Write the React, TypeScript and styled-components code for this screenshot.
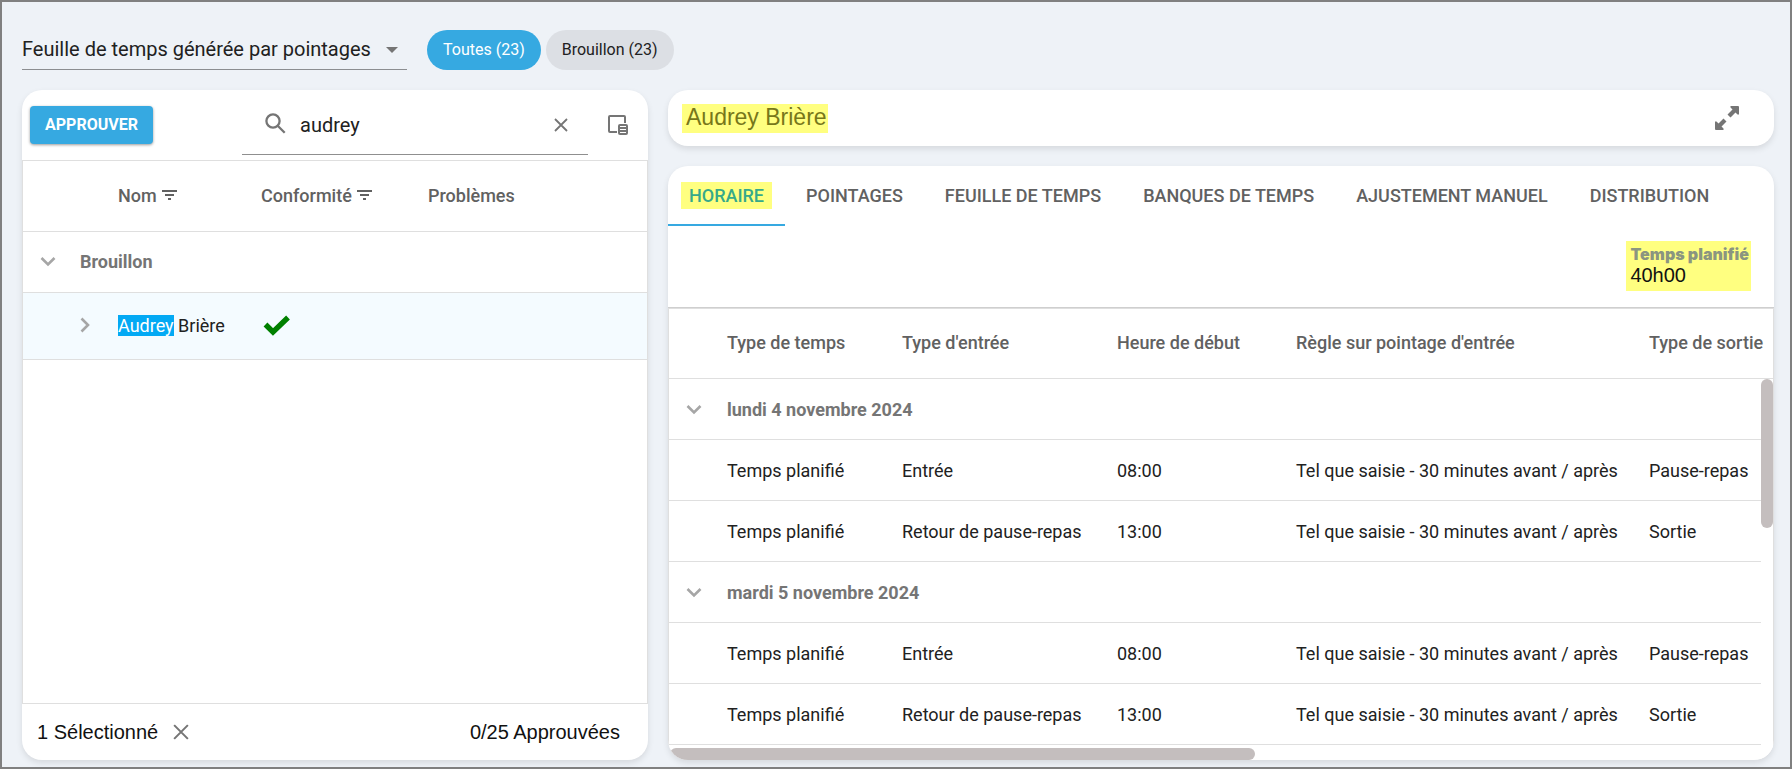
import React, { useState } from "react";
import styled, { createGlobalStyle } from "styled-components";

const roboto = `Roboto, "Noto Sans", sans-serif`;
const arial = `"Liberation Sans", Arial, sans-serif`;
const line = "#dfdfdf";
const blue = "#36a9e1";
const mark = "#ffff80";

const GlobalStyle = createGlobalStyle`
  *, *::before, *::after { box-sizing: border-box; }
  body { margin: 0; background: #eef2f7; font-family: ${roboto}; color: #212121; }
  button, input, select { font: inherit; color: inherit; }
  button { border: 0; padding: 0; background: none; cursor: pointer; }
  svg { display: block; }
`;

const Page = styled.main`
  display: flex;
  flex-direction: column;
  gap: 20px;
  min-height: 100vh;
  padding: 28px 16px 7px 20px;
  border: 2px solid #808080;
`;

const FilterBar = styled.header`
  display: flex;
  align-items: center;
  gap: 20px;
`;

const SelectField = styled.label`
  display: flex;
  align-items: center;
  width: 385px;
  height: 40px;
  border-bottom: 1px solid #8c8e91;
`;

const Select = styled.select`
  flex: 1;
  min-width: 0;
  height: 38px;
  padding: 0 0 2px;
  border: 0;
  outline: 0;
  appearance: none;
  background: transparent;
  font-size: 20px;
`;

const SelectArrow = styled.span`
  margin-right: 9px;
  border: 6px solid transparent;
  border-top-color: #757575;
  border-bottom: 0;
  pointer-events: none;
`;

const Chips = styled.div`
  display: flex;
  gap: 5px;
`;

const Chip = styled.button<{ $active?: boolean }>`
  height: 40px;
  padding: 0 16px 2px;
  border-radius: 20px;
  font-size: 16px;
  background: ${(p) => (p.$active ? blue : "#dcdfe4")};
  color: ${(p) => (p.$active ? "#fff" : "#212121")};
`;

const Columns = styled.div`
  flex: 1;
  display: grid;
  grid-template-columns: minmax(0, 626fr) minmax(0, 1106fr);
  gap: 20px;
`;

const Card = styled.section`
  display: flex;
  flex-direction: column;
  min-width: 0;
  overflow: hidden;
  border-radius: 20px;
  background: #fff;
  box-shadow: 0 3px 6px rgba(0, 0, 0, 0.1);
`;

const ListToolbar = styled.div`
  display: flex;
  align-items: center;
  height: 70px;
  padding: 0 20px 0 8px;
`;

const ApproveButton = styled.button`
  height: 38px;
  padding: 0 15px 2px;
  border-radius: 4px;
  background: ${blue};
  color: #fff;
  font-size: 16px;
  font-weight: 700;
  box-shadow: 0 1px 3px rgba(0, 0, 0, 0.4);
`;

const SearchField = styled.label`
  display: flex;
  align-items: center;
  gap: 14px;
  width: 346px;
  height: 60px;
  margin: 0 20px 0 auto;
  padding: 0 20px 0 22px;
  border-bottom: 1px solid #8f8f8f;
`;

const SearchInput = styled.input`
  flex: 1;
  min-width: 0;
  padding: 0;
  border: 0;
  outline: 0;
  background: transparent;
  font-size: 20px;
`;

const TableFrame = styled.div`
  flex: 1;
  border: 1px solid ${line};

  td {
    padding-bottom: 2px;
  }
`;

const Table = styled.table`
  width: 100%;
  border-collapse: separate;
  border-spacing: 0;
  table-layout: fixed;
  font-size: 18px;
  line-height: 21px;
  white-space: nowrap;
`;

const HeadCell = styled.th<{ $compact?: boolean }>`
  height: ${(p) => (p.$compact ? 70 : 71)}px;
  padding: 0 0 2px;
  border-bottom: 1px solid ${line};
  color: #616161;
  font-weight: 500;
  text-align: left;
`;

const HeadLabel = styled.span`
  display: flex;
  align-items: center;
  gap: 5px;
`;

const Cell = styled.td`
  height: 61px;
  padding: 0;
  border-bottom: 1px solid ${line};
`;

const GroupCell = styled(Cell)`
  color: #757575;
  font-weight: 700;
`;

const SelectedRow = styled.tr`
  background: #f4fbff;

  ${Cell} {
    height: 67px;
  }
`;

const ToggleButton = styled.button<{ $nested?: boolean }>`
  display: block;
  margin-left: ${(p) => (p.$nested ? 48 : 11)}px;
  color: #a6a6a6;
`;

const Found = styled.mark`
  background: #03a9f4;
  color: #fff;
`;

const ListFooter = styled.footer`
  display: flex;
  align-items: center;
  justify-content: space-between;
  height: 56px;
  padding: 0 28px 0 15px;
  color: #111;
  font-family: ${arial};
  font-size: 20px;
`;

const Selection = styled.div`
  display: flex;
  align-items: center;
  gap: 15px;
`;

const IconButton = styled.button`
  color: #757575;
`;

const Detail = styled.div`
  display: flex;
  flex-direction: column;
  gap: 20px;
  min-width: 0;
`;

const TitleCard = styled(Card)`
  flex-direction: row;
  align-items: center;
  justify-content: space-between;
  height: 56px;
  padding: 0 35px 0 14px;
`;

const Title = styled.h1`
  margin: 0;
  padding: 0 1px 3px 4px;
  background: ${mark};
  color: #77771a;
  font-family: ${arial};
  font-size: 23px;
  font-weight: 400;
  line-height: 26px;
`;

const DetailCard = styled(Card)`
  flex: 1;
`;

const Tabs = styled.nav`
  display: flex;
`;

const Tab = styled.button<{ $active?: boolean }>`
  height: 60px;
  padding: 0 13px;
  border-bottom: 2px solid ${(p) => (p.$active ? blue : "transparent")};
  color: ${(p) => (p.$active ? "#36a98a" : "#616161")};
  font-size: 18px;
  font-weight: 500;
  white-space: nowrap;
`;

const TabText = styled.span<{ $active?: boolean }>`
  display: block;
  padding: 3px 8px;
  background: ${(p) => (p.$active ? mark : "transparent")};
`;

const Summary = styled.div`
  display: flex;
  justify-content: flex-end;
  padding: 15px 23px 16px;
  border-bottom: 1px solid #cfcfcf;
`;

const Total = styled.dl`
  margin: 0;
  padding: 4px 2px 4px 4px;
  background: ${mark};
  font-family: ${arial};
`;

const TotalLabel = styled.dt`
  color: #8b9580;
  font-family: Inter, ${arial};
  font-size: 16px;
  font-weight: 900;
  line-height: 19px;
`;

const TotalValue = styled.dd`
  margin: 0;
  color: #111;
  font-size: 20px;
  line-height: 23px;
`;

const ScheduleFrame = styled.div`
  position: relative;
  flex: 1;
  display: flex;
  flex-direction: column;
  border: 1px solid ${line};
  border-bottom: 0;
`;

const VerticalTrack = styled.div`
  position: absolute;
  top: 70px;
  right: 0;
  bottom: 0;
  width: 12px;
  background: #fff;
`;

const VerticalThumb = styled.div`
  height: 39%;
  border-radius: 6px;
  background: #c4bebe;
`;

const HorizontalTrack = styled.div`
  margin-top: auto;
  padding-left: 1px;
`;

const HorizontalThumb = styled.div`
  width: 53%;
  height: 12px;
  border-radius: 6px;
  background: #c4bebe;
`;

const FilterIcon = () => (
  <svg width="15" height="12" viewBox="0 0 15 12" fill="#616161" aria-hidden="true">
    <path d="M0 1h15v2H0zM3 5h9v2H3zM6 9h3v2H6z" />
  </svg>
);

const ChevronIcon = ({ right }: { right?: boolean }) => (
  <svg width="28" height="28" viewBox="0 0 28 28" fill="none" stroke="currentColor" strokeWidth="2.6" aria-hidden="true">
    <path d={right ? "M10.500 7.500l6.500 6.500-6.500 6.500" : "M7.500 11l6.500 6.500L20.500 11"} />
  </svg>
);

const CloseIcon = ({ size }: { size: number }) => (
  <svg width={size} height={size} viewBox="0 0 14 14" fill="none" stroke="#757575" strokeWidth="1.8" aria-hidden="true">
    <path d="M1 1l12 12M13 1L1 13" />
  </svg>
);

const SearchIcon = () => (
  <svg width="22" height="26" viewBox="0 0 22 26" fill="none" stroke="#757575" strokeWidth="2.3" aria-hidden="true">
    <circle cx="9" cy="9" r="6.6" />
    <path d="M13.700 13.700l7 7" />
  </svg>
);

const ColumnsIcon = () => (
  <svg width="20" height="20" viewBox="0 0 20 20" aria-hidden="true">
    <path d="M17 8V2q0-1-1-1H2Q1 1 1 2v14q0 1 1 1h7" fill="none" stroke="#757575" strokeWidth="2" />
    <rect x="10" y="9" width="10" height="11" rx="2" fill="#757575" />
    <path d="M12 11.500h6M12 14.500h6M12 17.500h6" stroke="#fff" strokeWidth="1.2" />
  </svg>
);

const CheckIcon = () => (
  <svg width="30" height="22" viewBox="0 0 30 22" fill="none" stroke="#008000" strokeWidth="5.4" aria-hidden="true">
    <path d="M4.500 10.500l7.500 7.500L27 3.500" />
  </svg>
);

const ExpandIcon = () => (
  <svg width="24" height="24" viewBox="0 0 24 24" fill="#757575" aria-hidden="true">
    <path d="M15.500 0H23q1 0 1 1v7.500h-1.500L20.500 6.500l-5 5-3-3 5-5-2-2z" />
    <path d="M8.500 24H1q-1 0-1-1v-7.500h1.500l2 2 5-5 3 3-5 5 2 2z" />
  </svg>
);

const tabs = [
  "HORAIRE",
  "POINTAGES",
  "FEUILLE DE TEMPS",
  "BANQUES DE TEMPS",
  "AJUSTEMENT MANUEL",
  "DISTRIBUTION",
];

const rule = "Tel que saisie - 30 minutes avant / après";
const entries = [
  ["Temps planifié", "Entrée", "08:00", rule, "Pause-repas"],
  ["Temps planifié", "Retour de pause-repas", "13:00", rule, "Sortie"],
];
const days = ["lundi 4 novembre 2024", "mardi 5 novembre 2024"];

const Column = styled.col<{ $width?: number }>`
  width: ${(p) => (p.$width ? `${p.$width}px` : "auto")};
`;

function EmployeeList() {
  const [query, setQuery] = useState("audrey");
  return (
    <Card>
      <ListToolbar>
        <ApproveButton>APPROUVER</ApproveButton>
        <SearchField>
          <SearchIcon />
          <SearchInput
            aria-label="Rechercher"
            value={query}
            onChange={(e) => setQuery(e.target.value)}
          />
          <IconButton aria-label="Effacer" onClick={() => setQuery("")}>
            <CloseIcon size={14} />
          </IconButton>
        </SearchField>
        <IconButton aria-label="Choisir les colonnes">
          <ColumnsIcon />
        </IconButton>
      </ListToolbar>
      <TableFrame>
        <Table>
          <colgroup>
            <Column $width={57} />
            <Column $width={38} />
            <Column $width={143} />
            <Column $width={167} />
            <Column />
          </colgroup>
          <thead>
            <tr>
              <HeadCell colSpan={2} />
              <HeadCell><HeadLabel>Nom<FilterIcon /></HeadLabel></HeadCell>
              <HeadCell><HeadLabel>Conformité<FilterIcon /></HeadLabel></HeadCell>
              <HeadCell>Problèmes</HeadCell>
            </tr>
          </thead>
          <tbody>
            <tr>
              <GroupCell>
                <ToggleButton aria-label="Réduire"><ChevronIcon /></ToggleButton>
              </GroupCell>
              <GroupCell colSpan={4}>Brouillon</GroupCell>
            </tr>
            <SelectedRow>
              <Cell colSpan={2}>
                <ToggleButton $nested aria-label="Développer">
                  <ChevronIcon right />
                </ToggleButton>
              </Cell>
              <Cell><Found>Audrey</Found> Brière</Cell>
              <Cell><CheckIcon /></Cell>
              <Cell />
            </SelectedRow>
          </tbody>
        </Table>
      </TableFrame>
      <ListFooter>
        <Selection>
          <span>1 Sélectionné</span>
          <IconButton aria-label="Désélectionner"><CloseIcon size={16} /></IconButton>
        </Selection>
        <span>0/25 Approuvées</span>
      </ListFooter>
    </Card>
  );
}

function Schedule() {
  return (
    <ScheduleFrame>
      <Table>
        <colgroup>
          <Column $width={58} />
          <Column $width={175} />
          <Column $width={215} />
          <Column $width={179} />
          <Column $width={353} />
          <Column />
        </colgroup>
        <thead>
          <tr>
            <HeadCell $compact />
            <HeadCell $compact>Type de temps</HeadCell>
            <HeadCell $compact>Type d'entrée</HeadCell>
            <HeadCell $compact>Heure de début</HeadCell>
            <HeadCell $compact>Règle sur pointage d'entrée</HeadCell>
            <HeadCell $compact>Type de sortie</HeadCell>
          </tr>
        </thead>
        {days.map((day) => (
          <tbody key={day}>
            <tr>
              <GroupCell>
                <ToggleButton aria-label="Réduire"><ChevronIcon /></ToggleButton>
              </GroupCell>
              <GroupCell colSpan={5}>{day}</GroupCell>
            </tr>
            {entries.map((entry) => (
              <tr key={entry[1]}>
                <Cell />
                {entry.map((value) => (
                  <Cell key={value}>{value}</Cell>
                ))}
              </tr>
            ))}
          </tbody>
        ))}
      </Table>
      <VerticalTrack><VerticalThumb /></VerticalTrack>
      <HorizontalTrack><HorizontalThumb /></HorizontalTrack>
    </ScheduleFrame>
  );
}

export default function App() {
  const [tab, setTab] = useState(tabs[0]);
  return (
    <>
      <GlobalStyle />
      <Page>
        <FilterBar>
          <SelectField>
            <Select aria-label="Type de feuille">
              <option>Feuille de temps générée par pointages</option>
            </Select>
            <SelectArrow />
          </SelectField>
          <Chips>
            <Chip $active>Toutes (23)</Chip>
            <Chip>Brouillon (23)</Chip>
          </Chips>
        </FilterBar>
        <Columns>
          <EmployeeList />
          <Detail>
            <TitleCard>
              <Title>Audrey Brière</Title>
              <IconButton aria-label="Agrandir"><ExpandIcon /></IconButton>
            </TitleCard>
            <DetailCard>
              <Tabs>
                {tabs.map((name) => (
                  <Tab key={name} $active={name === tab} onClick={() => setTab(name)}>
                    <TabText $active={name === tab}>{name}</TabText>
                  </Tab>
                ))}
              </Tabs>
              <Summary>
                <Total>
                  <TotalLabel>Temps planifié</TotalLabel>
                  <TotalValue>40h00</TotalValue>
                </Total>
              </Summary>
              <Schedule />
            </DetailCard>
          </Detail>
        </Columns>
      </Page>
    </>
  );
}
